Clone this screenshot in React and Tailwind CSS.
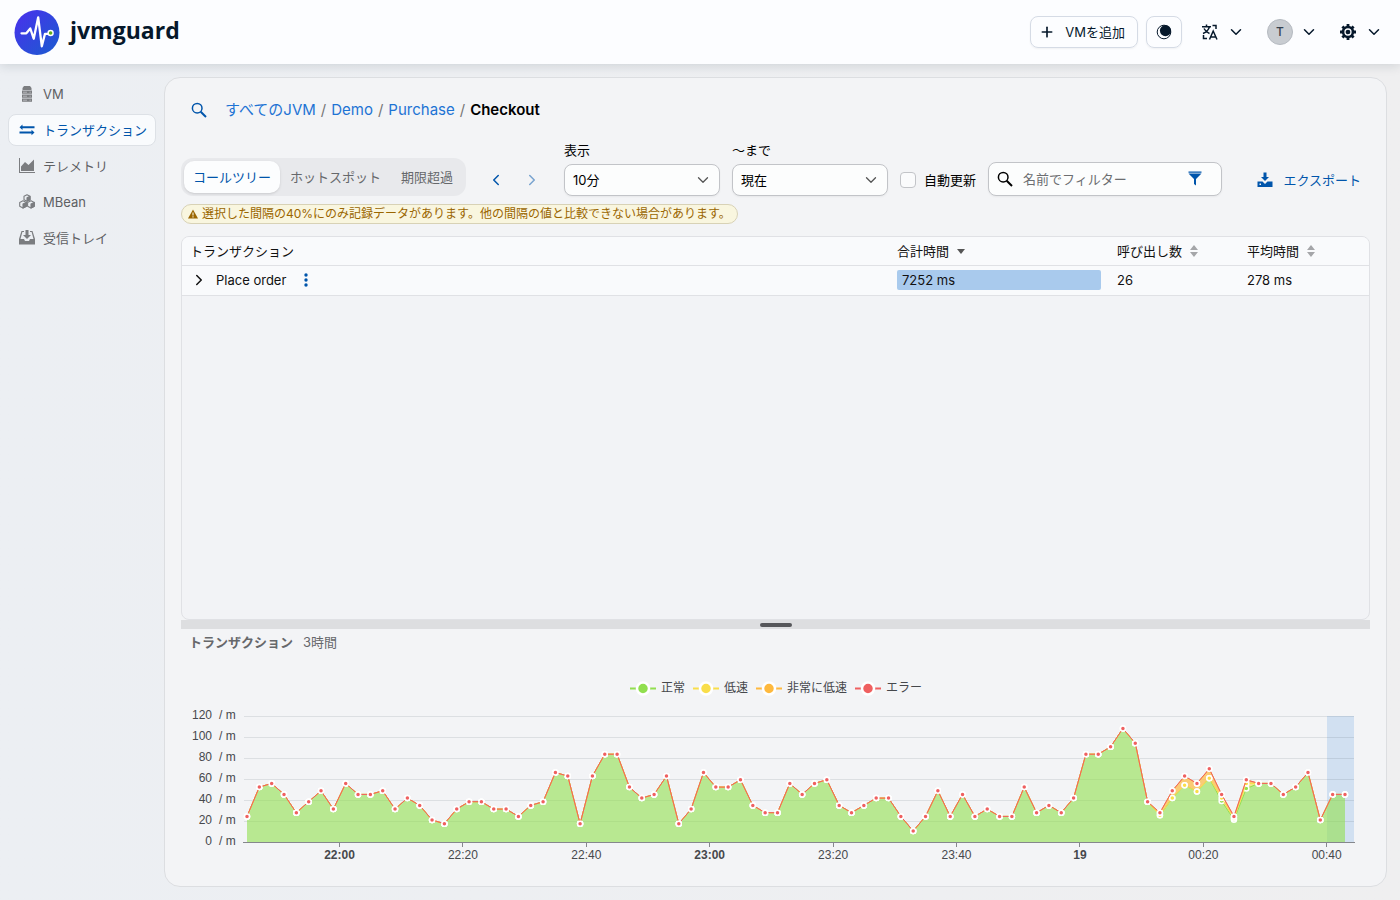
import React, { useState } from 'react';
import { ChevronDown, ChevronLeft, ChevronRight, Plus } from 'lucide-react';

const NAV = [
  { label: 'VM', icon: ServerIcon },
  { label: 'トランザクション', icon: ExchangeIcon, active: true },
  { label: 'テレメトリ', icon: AreaChartIcon },
  { label: 'MBean', icon: CubesIcon },
  { label: '受信トレイ', icon: InboxIcon },
];

const TABS = ['コールツリー', 'ホットスポット', '期限超過'];

// transactions per sample, one sample every two minutes
const TOTAL = [
  7, 15, 16, 13, 8, 11, 14, 9, 16, 13, 13, 14, 9, 12, 10, 6, 5, 9, 11, 11, 9, 9, 7, 10, 11, 19, 18,
  5, 18, 24, 24, 15, 12, 13, 18, 5, 9, 19, 15, 15, 17, 10, 8, 8, 16, 13, 16, 17, 10, 8, 10, 12, 12, 7, 3, 7, 14, 7, 13, 7,
  9, 7, 7, 15, 8, 10, 8, 12, 24, 24, 26, 31, 27, 11, 8, 14, 18, 16, 20, 13, 7, 17, 16, 16, 13, 15, 19, 6, 13, 13,
];
const SLOW = { 74: 7.3, 75: 12, 76: 15.5, 77: 13.8, 78: 17.4, 79: 12, 80: 6.4, 81: 16 };
const NORMAL = { ...SLOW, 79: 11.2, 80: 6.1, 81: 14.6 };

const LEGEND = [
  { label: '正常', color: '#91df4f', x: 449 },
  { label: '低速', color: '#f9de4a', x: 512 },
  { label: '非常に低速', color: '#feb93e', x: 575 },
  { label: 'エラー', color: '#ef6060', x: 674 },
];

const X_TICKS = ['22:00', '22:20', '22:40', '23:00', '23:20', '23:40', '19', '00:20', '00:40'];
const BOLD_TICKS = ['22:00', '23:00', '19'];

function ServerIcon() {
  return (
    <svg viewBox="0 0 16 16" className="size-4" fill="currentColor">
      <path d="M5 0h6l1.5 2v2h-9V2zM3 4.500h10v3.300H3zM3 8.500h10v3.300H3zM3 12.500h10v3.300H3z" />
      <path d="M4 6.200h4M4 10.200h4M4 14.200h4M10.500 6.200h1.300M10.500 10.200h1.300M10.500 14.200h1.300" stroke="#eef1f4" strokeWidth=".5" />
    </svg>
  );
}

function ExchangeIcon() {
  return (
    <svg viewBox="0 0 16 16" className="size-4" fill="currentColor">
      <path d="M3.500 2.500v1.800H15.500v1.900H3.500V8L.5 5.200zM12.500 7.800v1.700H.5v1.900h12v1.800l3-2.700z" />
    </svg>
  );
}

function AreaChartIcon() {
  return (
    <svg viewBox="0 0 16 16" className="size-4" fill="currentColor">
      <path d="M0 0h1v14h15v1H0zM2 8.500L6 4l3.500 3L15 1.500V13H2z" />
    </svg>
  );
}

function CubesIcon() {
  return (
    <svg viewBox="0 0 16 16" className="size-4" fill="none" stroke="currentColor" strokeWidth="1.1" strokeLinejoin="round">
      <path d="M8 .7l3 1.500v3.500L8 7.300 5 5.700V2.200z" />
      <path d="M8 3.700v3.600l3-1.600V2.200z" fill="currentColor" />
      <path d="M4 6.800l3.400 1.600v3.900L4 14 .7 12.300V8.400z" />
      <path d="M4 10v4l3.400-1.700V8.400z" fill="currentColor" />
      <path d="M12 6.800l3.300 1.600v3.900L12 14l-3.400-1.700V8.400z" />
      <path d="M12 10v4l3.300-1.700V8.400z" fill="currentColor" />
    </svg>
  );
}

function InboxIcon() {
  return (
    <svg viewBox="0 0 16 16" className="size-4" fill="currentColor">
      <path d="M6.500 0h3v5H12L8 9 4 5h2.500z" />
      <path d="M2.500 1H5v1H3.400L1.500 9H5l1 2h4l1-2h3.500L12.600 2H11V1h2.500L16 9v5.500H0V9z" />
    </svg>
  );
}

function SearchIcon() {
  return (
    <svg viewBox="0 0 16 16" className="size-4 shrink-0" fill="none" stroke="currentColor">
      <circle cx="6.200" cy="6.200" r="4.800" strokeWidth="1.500" />
      <path d="M9.700 9.700l5.300 5.300" strokeWidth="2" />
    </svg>
  );
}

function FilterIcon() {
  return (
    <svg viewBox="0 0 16 16" className="size-4" fill="currentColor">
      <path d="M1.500 .5h13v1.200h-13zM1.500 2.500h13L9 8v6.500L7 13V8z" />
    </svg>
  );
}

function DownloadIcon() {
  return (
    <svg viewBox="0 0 16 16" className="size-4" fill="currentColor">
      <path d="M6.500 .5h3v4.500H12L8 9 4 5h2.500z" />
      <path fillRule="evenodd" d="M.5 9.500h5L8 12l2.500-2.500h5v5.500H.5V9.500zM2.500 11.500V13H4v-1.500z" />
    </svg>
  );
}

function MoonIcon() {
  return (
    <svg viewBox="0 0 16 16" className="size-4">
      <circle cx="8" cy="8" r="6.800" fill="none" stroke="currentColor" strokeWidth="1" />
      <circle cx="9.500" cy="6.600" r="5.600" fill="currentColor" />
    </svg>
  );
}

function TranslateIcon() {
  return (
    <svg viewBox="0 0 16 16" className="size-4" fill="none" stroke="currentColor" strokeWidth="1.500">
      <path d="M0 2.800h9M4.500.5v2.300M7.500 2.800C6.500 6 4 8.500 1 9.500M2 4.500C3.500 7.500 5.500 8.800 7.500 9.500" />
      <path d="M7.500 15.500L11.200 7l3.800 8.500M9 13h4.700" />
      <path d="M10.500 1.500h3.500V5M1.500 11v3.500H5" />
    </svg>
  );
}

function CogIcon() {
  return (
    <svg viewBox="0 0 16 16" className="size-4">
      <path
        d="M8 0v16M0 8h16M2.400 2.400l11.200 11.200M13.600 2.400L2.400 13.600"
        stroke="currentColor"
        strokeWidth="2.800"
      />
      <circle cx="8" cy="8" r="6.200" fill="currentColor" />
      <circle cx="8" cy="8" r="3" fill="none" stroke="#fcfdff" strokeWidth="1.300" />
    </svg>
  );
}

function WarningIcon() {
  return (
    <svg viewBox="0 0 10 10" className="size-[10px]">
      <path d="M5 .5L10 9.500H0z" fill="currentColor" />
      <path d="M5 3.500v3M5 7.300v1.100" stroke="#f9f6df" strokeWidth="1.100" />
    </svg>
  );
}

function Logo() {
  return (
    <svg viewBox="0 0 46 46" className="size-[46px]">
      <defs>
        <linearGradient id="logo" x1="0" y1="0" x2="1" y2="1">
          <stop offset="0.100" stopColor="#4534ea" />
          <stop offset="0.900" stopColor="#1f58d2" />
        </linearGradient>
      </defs>
      <circle cx="23" cy="23.500" r="22.500" fill="url(#logo)" />
      <path
        d="M7.500 24.300H12.300L16.300 19.500 19.700 29.700 24.200 8.300 27.800 37.300 31 24.800H34.500"
        fill="none"
        stroke="#fff"
        strokeWidth="2.300"
        strokeLinejoin="round"
        strokeLinecap="round"
      />
      <circle cx="36.600" cy="24" r="2.500" fill="#5fae1c" stroke="#fff" strokeWidth="1.400" />
    </svg>
  );
}

function Header() {
  return (
    <header className="relative flex h-16 items-center bg-[#fcfdff] pr-[17px] pl-3.5 text-[#06182b] shadow-[0_2px_10px_rgba(20,40,60,0.14)]">
      <Logo />
      <h1 className="ml-2.5 pb-1 font-['Open_Sans',sans-serif] text-[23px] font-bold">jvmguard</h1>
      <div className="ml-auto flex items-center gap-2">
        <button className="flex h-8 items-center gap-2.5 rounded-lg border border-[#d5dbe5] pr-3 pl-2 shadow-xs">
          <Plus size={16} strokeWidth={2.5} />
          VMを追加
        </button>
        <button aria-label="テーマ" className="flex h-8 w-9 items-center justify-center rounded-lg border border-[#d5dbe5] shadow-xs">
          <MoonIcon />
        </button>
      </div>
      <div className="ml-5 flex items-center gap-[22px]">
        <button aria-label="言語" className="flex items-center gap-[9px]">
          <TranslateIcon />
          <ChevronDown size={18} />
        </button>
        <button aria-label="ユーザー" className="flex items-center gap-[7px]">
          <span className="flex size-[26px] items-center justify-center rounded-full border border-[#b5bac1] bg-[#c8ccd1] text-[12px] font-medium text-[#36414f]">T</span>
          <ChevronDown size={18} />
        </button>
        <button aria-label="設定" className="flex items-center gap-[9px]">
          <CogIcon />
          <ChevronDown size={18} />
        </button>
      </div>
    </header>
  );
}

function Sidebar() {
  return (
    <nav className="flex w-[164px] shrink-0 flex-col gap-1 px-2 pt-3.5">
      {NAV.map(({ label, icon: Icon, active }) => (
        <a
          key={label}
          href="#"
          className={
            active
              ? 'flex h-8 items-center gap-2 rounded-lg border border-[#dde1e6] bg-[#f9fbfd] pl-2.5 whitespace-nowrap text-[#0055ab]'
              : 'flex h-8 items-center gap-2 rounded-lg border border-transparent pl-2.5 whitespace-nowrap text-[#5e6063]'
          }
        >
          <span className={active ? '' : 'text-[#7b7d80]'}><Icon /></span>
          {label}
        </a>
      ))}
    </nav>
  );
}

function Breadcrumb() {
  return (
    <div className="flex h-8 items-center text-[15px]">
      <button aria-label="検索" className="flex w-9 justify-center text-[#0055ab]"><SearchIcon /></button>
      <div className="ml-2 flex gap-[5px] text-[#1d73d4]">
        <a href="#">すべてのJVM</a>
        <span className="text-[#777]">/</span>
        <a href="#">Demo</a>
        <span className="text-[#777]">/</span>
        <a href="#">Purchase</a>
        <span className="text-[#777]">/</span>
        <span className="font-semibold text-black">Checkout</span>
      </div>
    </div>
  );
}

function SelectField({ id, label, value }) {
  return (
    <div className="flex w-[156px] flex-col gap-1">
      <label htmlFor={id} className="leading-5">{label}</label>
      <div className="relative">
        <select id={id} className="h-8 w-full appearance-none rounded-lg border border-[#c2c4c8] bg-[#fcfdfd] px-2 shadow-xs">
          <option>{value}</option>
        </select>
        <ChevronDown size={18} strokeWidth={1.75} className="pointer-events-none absolute top-[7px] right-2 text-[#555]" />
      </div>
    </div>
  );
}

function Toolbar() {
  const [tab, setTab] = useState(0);

  return (
    <div className="mt-3.5 flex items-end">
      <div className="flex rounded-xl bg-[#e8e9ec] p-[3px]">
        {TABS.map((name, i) => (
          <button
            key={name}
            onClick={() => setTab(i)}
            className={
              i === tab
                ? 'h-8 rounded-[10px] bg-[#fcfdfe] px-[9px] text-[#0055ab] shadow'
                : 'h-8 px-2.5 text-[#66686b]'
            }
          >
            {name}
          </button>
        ))}
      </div>
      <div className="mr-3.5 ml-3 flex h-8 items-center text-[#0055ab]">
        <button aria-label="前へ" className="flex w-9 justify-center"><ChevronLeft size={18} /></button>
        <button aria-label="次へ" className="flex w-9 justify-center opacity-50"><ChevronRight size={18} /></button>
      </div>
      <div className="flex items-end gap-3">
        <SelectField id="view" label="表示" value="10分" />
        <SelectField id="until" label="～まで" value="現在" />
        <label className="flex h-8 items-center gap-2">
          <input type="checkbox" className="size-4 appearance-none rounded border border-[#c2c4c8] bg-[#fafbfc]" />
          自動更新
        </label>
        <div className="flex h-[34px] w-[234px] items-center gap-2.5 rounded-lg border border-[#c2c4c8] bg-[#fcfdfd] px-2 shadow-xs">
          <SearchIcon />
          <input
            type="text"
            aria-label="フィルター"
            placeholder="名前でフィルター"
            className="min-w-0 flex-1 outline-none placeholder:text-[#6c6e71]"
          />
          <button aria-label="フィルター設定" className="px-2.5 text-[#0055ab]"><FilterIcon /></button>
        </div>
      </div>
      <button className="ml-auto flex h-8 items-center gap-2.5 px-[9px] text-[#0055ab]">
        <DownloadIcon />
        エクスポート
      </button>
    </div>
  );
}

function SortIcon() {
  return (
    <svg viewBox="0 0 8 12" className="h-3 w-2" fill="#a5a6a9">
      <path d="M4 0l4 5H0zM0 7h8l-4 5z" />
    </svg>
  );
}

function CallTree() {
  return (
    <div className="mt-3 min-h-40 flex-1 overflow-hidden rounded-lg border border-[#e0e1e5] bg-[#f2f3f6]">
      <table className="w-full table-fixed border-collapse bg-[#f9fafc] text-left text-[#111]">
        <thead>
          <tr className="h-7 border-b border-[#e0e1e5]">
            <th className="px-2 font-normal">トランザクション</th>
            <th className="w-[220px] px-2 font-normal">
              <div className="flex items-center gap-2">
                合計時間
                <svg viewBox="0 0 8 5" className="mt-0.5 h-[5px] w-2" fill="#555"><path d="M0 0h8L4 5z" /></svg>
              </div>
            </th>
            <th className="w-[130px] px-2 font-normal">
              <div className="flex items-center gap-2">呼び出し数<SortIcon /></div>
            </th>
            <th className="w-[130px] px-2 font-normal">
              <div className="flex items-center gap-2">平均時間<SortIcon /></div>
            </th>
          </tr>
        </thead>
        <tbody>
          <tr className="h-[30px] border-b border-[#e0e1e5]">
            <td className="px-2">
              <div className="flex items-center">
                <button aria-label="展開" className="flex w-[18px] justify-center"><ChevronRight size={18} /></button>
                <span className="ml-2">Place order</span>
                <button aria-label="メニュー" className="ml-4 w-2 text-[#0055ab]">
                  <svg viewBox="0 0 4 14" className="mx-auto h-3.5 w-1" fill="currentColor">
                    <circle cx="2" cy="2" r="1.700" />
                    <circle cx="2" cy="7" r="1.700" />
                    <circle cx="2" cy="12" r="1.700" />
                  </svg>
                </button>
              </div>
            </td>
            <td className="px-2"><div className="h-5 rounded-xs bg-[#a9caed] pl-[5px] leading-5">7252 ms</div></td>
            <td className="px-2">26</td>
            <td className="px-2">278 ms</td>
          </tr>
        </tbody>
      </table>
    </div>
  );
}

const STEP = 12.337;
const BASE = 182;
const UNIT = 3.66;

function points(overrides) {
  return TOTAL.map((n, i) => [66 + i * STEP, BASE - (overrides[i] ?? n) * UNIT]);
}

function path(pts) {
  return pts.map(([x, y], i) => `${i ? 'L' : 'M'}${x.toFixed(1)} ${y.toFixed(1)}`).join('');
}

function Series({ pts, color }) {
  return (
    <g>
      <path d={path(pts)} fill="none" stroke={color} strokeWidth="1" />
      {pts.map(([x, y]) => (
        <circle key={x} cx={x} cy={y} r="2.500" fill={color} stroke="#fff" strokeWidth="1.500" />
      ))}
    </g>
  );
}

function Chart() {
  const normal = points(NORMAL);
  const slow = points(SLOW);
  const total = points({});
  const last = total[total.length - 1][0];
  const below = (pts) => [...pts].reverse().map(([x, y]) => `L${x.toFixed(1)} ${y.toFixed(1)}`).join('');

  return (
    <svg viewBox="0 0 1189 210" className="block w-full" fontFamily="'Liberation Sans', 'Noto Sans CJK JP', sans-serif" fontSize="12" fill="#46484c">
      {LEGEND.map(({ label, color, x }) => (
        <g key={label}>
          <path d={`M${x} 28.500h26`} stroke={color} strokeWidth="2" />
          <circle cx={x + 13} cy="28.500" r="6" fill={color} stroke="#fff" strokeWidth="2.500" />
          <text x={x + 31} y="32">{label}</text>
        </g>
      ))}
      <rect x="1146" y="56" width="27" height="126" fill="#5b9de0" opacity=".22" />
      {[120, 100, 80, 60, 40, 20, 0].map((v, i) => (
        <g key={v}>
          <text x="31" y={59 + i * 21} textAnchor="end">{v}</text>
          <text x="38" y={59 + i * 21}>/ m</text>
          {v > 0 && <path d={`M63 ${56.5 + i * 21}H1173`} stroke="#3c4655" strokeOpacity=".12" />}
        </g>
      ))}
      <path d={`${path(normal)}L${last} ${BASE}L66 ${BASE}Z`} fill="#91df4f" opacity=".6" />
      <path d={`${path(slow)}${below(normal)}Z`} fill="#f9de4a" opacity=".6" />
      <path d={`${path(total)}${below(slow)}Z`} fill="#feb93e" opacity=".7" />
      <path d="M62 182.500H1174" stroke="#85878c" />
      <Series pts={normal} color="#91df4f" />
      <Series pts={slow} color="#f9de4a" />
      <Series pts={total} color="#feb93e" />
      <Series pts={total} color="#ef6060" />
      {X_TICKS.map((t, i) => (
        <g key={t}>
          <path d={`M${Math.round(158 + i * 123.4) + 0.5} 183v4`} stroke="#85878c" />
          <text x={158.5 + i * 123.4} y="199" textAnchor="middle" fontWeight={BOLD_TICKS.includes(t) ? 'bold' : 'normal'}>{t}</text>
        </g>
      ))}
    </svg>
  );
}

export default function App() {
  return (
    <div className="flex min-h-screen flex-col bg-linear-to-r from-[#eceff3] to-[#efeff0] font-[Inter,'Noto_Sans_CJK_JP',sans-serif] text-[13px] leading-5 text-black">
      <Header />
      <div className="flex flex-1">
        <Sidebar />
        <main className="mt-[13px] mr-[13px] mb-[13px] flex min-w-0 flex-1 flex-col rounded-2xl border border-[#dcdee1] bg-[#f3f4f6] p-4">
          <Breadcrumb />
          <Toolbar />
          <div className="mt-2 flex h-5 items-center gap-1 self-start rounded-full border border-[#d8d2b6] bg-[#f9f6df] px-1.5 text-[12px] text-[#9a6500]">
            <WarningIcon />
            選択した間隔の40%にのみ記録データがあります。他の間隔の値と比較できない場合があります。
          </div>
          <CallTree />
          <div className="flex h-[9px] items-center justify-center bg-[#dddee0]">
            <div className="h-1 w-8 rounded-full bg-[#56575a]" />
          </div>
          <div className="flex gap-2.5 px-2 pt-[3px] pb-2 text-[#66686b]">
            <h2 className="font-bold">トランザクション</h2>
            <span>3時間</span>
          </div>
          <Chart />
        </main>
      </div>
    </div>
  );
}
